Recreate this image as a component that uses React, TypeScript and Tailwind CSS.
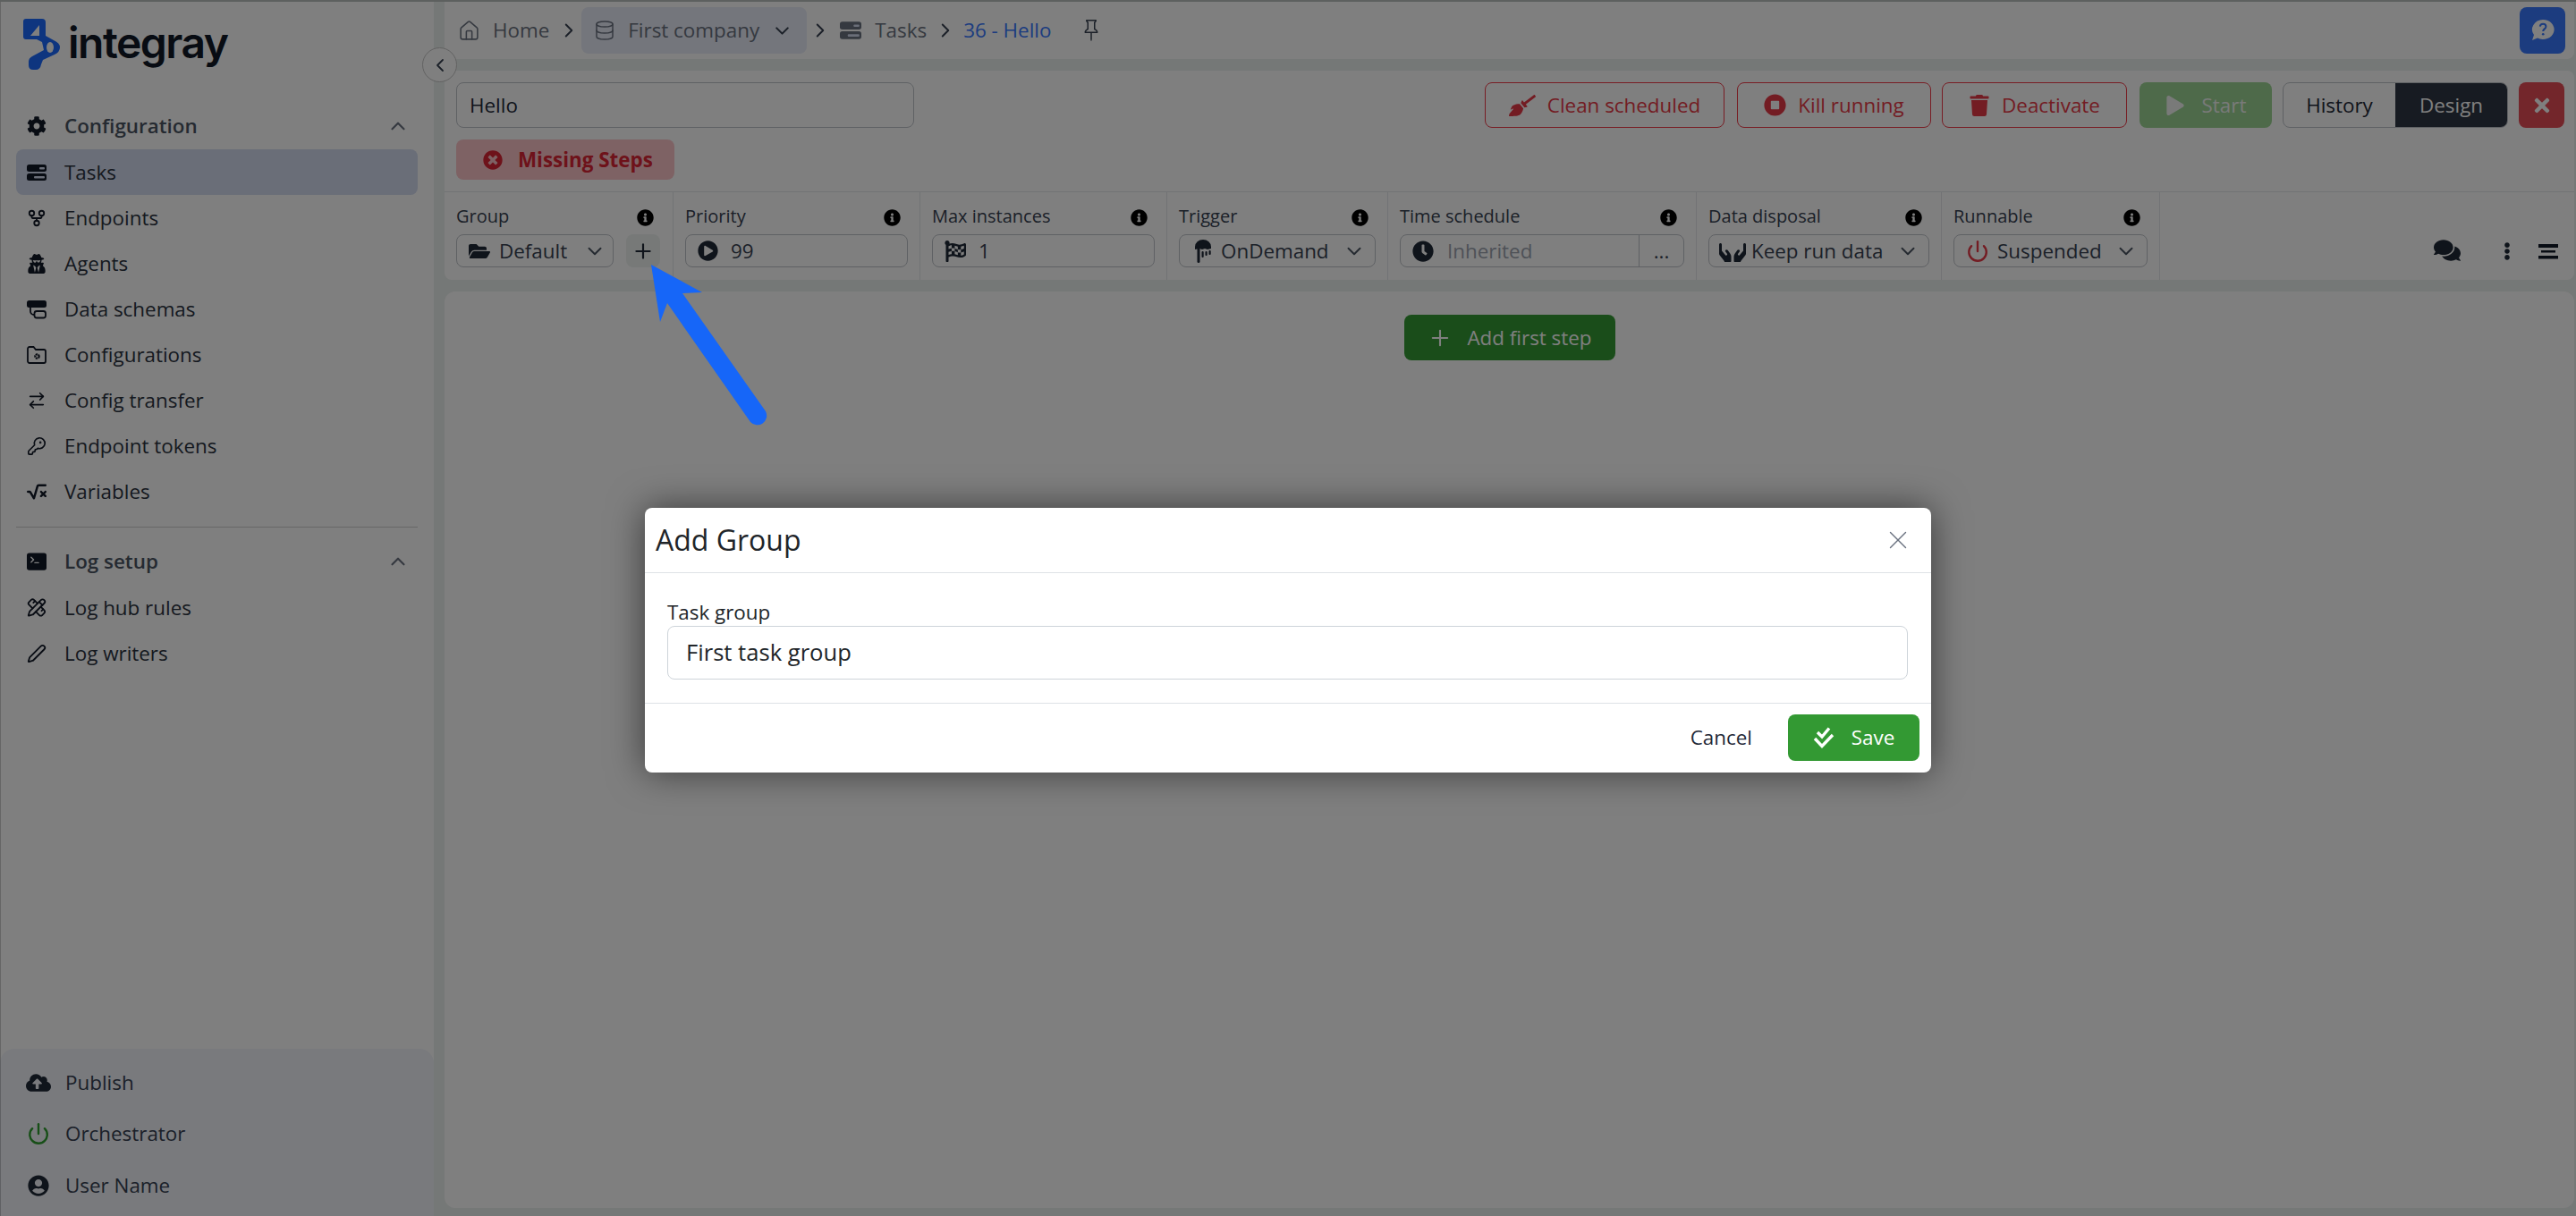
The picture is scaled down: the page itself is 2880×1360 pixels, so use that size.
import type { ReactNode } from 'react';
import {
  FaBroom,
  FaClock,
  FaCloudUploadAlt,
  FaCog,
  FaComments,
  FaEllipsisV,
  FaFlagCheckered,
  FaFolderOpen,
  FaHands,
  FaInfoCircle,
  FaPlay,
  FaPlayCircle,
  FaStopCircle,
  FaTimes,
  FaTimesCircle,
  FaTrash,
  FaUserCircle,
  FaUserSecret,
} from 'react-icons/fa';
import { FaSquareRootVariable } from 'react-icons/fa6';
import { BsPin, BsTerminalFill } from 'react-icons/bs';
import {
  ArrowRightLeft,
  ChevronDown,
  ChevronLeft,
  ChevronRight,
  ChevronUp,
  Database,
  GitFork,
  House,
  KeyRound,
  Pen,
  PencilRuler,
  Plus,
  Power,
  X,
} from 'lucide-react';

function TasksIcon({ size = 22 }: { size?: number }) {
  return (
    <svg width={size} height={size} viewBox="0 0 22 22">
      <rect x="0" y="2" width="22" height="8" rx="2.5" fill="currentColor" />
      <rect x="0" y="12" width="22" height="8" rx="2.5" fill="currentColor" />
      <rect x="14" y="5" width="6" height="2.4" rx="1" fill="#d4dcf0" />
      <rect x="8" y="15" width="12" height="2.4" rx="1" fill="#d4dcf0" />
    </svg>
  );
}

function SchemaIcon() {
  return (
    <svg width="22" height="22" viewBox="0 0 22 22" fill="none">
      <rect x="0" y="1" width="22" height="8" rx="2.5" fill="currentColor" />
      <path d="M4 9v4a4 4 0 0 0 4 4" stroke="currentColor" strokeWidth="1.8" />
      <rect x="8.5" y="13" width="12.5" height="7.5" rx="2.5" stroke="currentColor" strokeWidth="1.8" />
    </svg>
  );
}

function FolderGearIcon() {
  return (
    <svg width="22" height="20" viewBox="0 0 22 20" fill="none">
      <path
        d="M1 3a2 2 0 0 1 2-2h4.500l2.500 3h9a2 2 0 0 1 2 2v11a2 2 0 0 1-2 2H3a2 2 0 0 1-2-2z"
        stroke="currentColor"
        strokeWidth="1.8"
      />
      <circle cx="11.5" cy="11.5" r="2.2" stroke="currentColor" strokeWidth="2.2" strokeDasharray="2 0.6" />
    </svg>
  );
}

function ShowerIcon() {
  return (
    <svg width="18" height="28" viewBox="0 0 18 28" fill="currentColor">
      <path d="M0 9a9 8 0 0 1 18 0v2l-4 1-3-1-3 1-3-1-5 1z" />
      <rect x="2.5" y="10" width="3" height="17" rx="1.5" />
      <rect x="7.5" y="14" width="2.2" height="7" rx="1" />
      <rect x="11.5" y="14" width="2.2" height="5" rx="1" />
      <rect x="15.5" y="13" width="2.2" height="5" rx="1" />
    </svg>
  );
}

function BarsIcon() {
  return (
    <svg width="22" height="17" viewBox="0 0 22 17" fill="currentColor">
      <rect x="0" y="0" width="22" height="4" />
      <rect x="3" y="7" width="16" height="2.5" />
      <rect x="0" y="13" width="22" height="3.5" />
    </svg>
  );
}

function HelpBubbleIcon() {
  return (
    <svg width="26" height="24" viewBox="0 0 26 24">
      <path d="M13 0a12.500 11 0 1 1-6 20.600L1 23l2-6A12.500 11 0 0 1 13 0z" fill="#ffffff" />
      <path d="M9.800 7.600c.3-4 6.600-3.900 6.600.1 0 2.800-3.200 2.600-3.200 5.300" fill="none" stroke="#3878ff" strokeWidth="2" />
      <circle cx="13.2" cy="16.3" r="1.3" fill="#3878ff" />
    </svg>
  );
}

function DoubleCheckIcon() {
  return (
    <svg width="24" height="24" viewBox="0 0 24 24" fill="none" stroke="currentColor" strokeWidth="3.4">
      <path d="M5 6 10 11 18 1.500" />
      <path d="M2 13 10 21.500 22 9" />
    </svg>
  );
}

function LogoMark() {
  return (
    <svg width="42" height="58" viewBox="0 0 42 58">
      <path
        d="M3 1h18q4 0 4 4v15l9 5q7 3 7 8t-6 8l-13 6-2 5q-1 6-6 6h-3q-5 0-5-5v-4q0-4 4-6l13-7-2-9-6-3H3q-3 0-3-3V4q0-3 3-3z"
        fill="#1d6bff"
      />
      <path d="M18 8v12H8z" fill="#ffffff" />
      <ellipse cx="30" cy="33" rx="4" ry="6" fill="#ffffff" />
    </svg>
  );
}

function NavItem({ icon, label, active }: { icon: ReactNode; label: string; active?: boolean }) {
  return (
    <div className={`flex h-[51px] items-center rounded-lg pl-3 text-[22.4px] text-[#2b323e] ${active ? 'bg-[#d4dcf0]' : ''}`}>
      <span className="flex w-[22px] justify-center text-[#111827]">{icon}</span>
      <span className="ml-5">{label}</span>
    </div>
  );
}

function NavHeader({ icon, label }: { icon: ReactNode; label: string }) {
  return (
    <div className="flex h-[51px] items-center pb-[2px] pl-3 pr-[9px] text-[22.4px] font-semibold text-[#4b5563]">
      <span className="flex w-[22px] justify-center text-[#111827]">{icon}</span>
      <span className="ml-5 flex-1">{label}</span>
      <ChevronUp size={26} strokeWidth={2} className="text-[#6b7280]" />
    </div>
  );
}

function Sidebar() {
  return (
    <aside className="flex h-full w-[485px] shrink-0 flex-col bg-white">
      <div className="flex h-[114px] items-start pl-[26px] pt-[18px]">
        <LogoMark />
        <span className="ml-[8px] mt-[-8px] font-['Inter',sans-serif] text-[48px] font-semibold leading-[72px] tracking-[-1.5px] text-[#111827]">
          integray
        </span>
      </div>
      <div className="px-[18px]">
        <NavHeader icon={<FaCog size={22} />} label="Configuration" />
        <NavItem active icon={<TasksIcon />} label="Tasks" />
        <NavItem icon={<GitFork size={24} strokeWidth={2} />} label="Endpoints" />
        <NavItem icon={<FaUserSecret size={22} />} label="Agents" />
        <NavItem icon={<SchemaIcon />} label="Data schemas" />
        <NavItem icon={<FolderGearIcon />} label="Configurations" />
        <NavItem icon={<ArrowRightLeft size={24} strokeWidth={1.8} />} label="Config transfer" />
        <NavItem icon={<KeyRound size={24} strokeWidth={1.8} />} label="Endpoint tokens" />
        <NavItem icon={<FaSquareRootVariable size={24} />} label="Variables" />
        <div className="mb-[13px] mt-[14px] border-t border-[#cfcfcf]" />
        <NavHeader icon={<BsTerminalFill size={22} />} label="Log setup" />
        <NavItem icon={<PencilRuler size={23} strokeWidth={2} />} label="Log hub rules" />
        <NavItem icon={<Pen size={22} strokeWidth={2} />} label="Log writers" />
      </div>
      <div className="mt-auto flex h-[187px] flex-col justify-center gap-[6.5px] rounded-t-2xl bg-[#f2f4fa] pl-[29px] pt-[3px] text-[22.4px] text-[#364152]">
        <div className="flex h-[51px] items-center gap-[16px]">
          <FaCloudUploadAlt size={28} className="text-[#1f2937]" />
          <span>Publish</span>
        </div>
        <div className="flex h-[51px] items-center gap-[16px]">
          <Power size={26} strokeWidth={2.2} className="ml-[1px] mr-[1px] text-[#2f9e2f]" />
          <span>Orchestrator</span>
        </div>
        <div className="flex h-[51px] items-center gap-[16px]">
          <FaUserCircle size={24} className="ml-[2px] mr-[2px] text-[#1f2937]" />
          <span>User Name</span>
        </div>
      </div>
    </aside>
  );
}

function TopBar() {
  return (
    <div className="flex h-[64px] shrink-0 items-center rounded-b-lg bg-white pl-[15px] pr-[10px] text-[22.4px] text-[#6b7280]">
      <House size={25} strokeWidth={1.5} />
      <span className="ml-[14px]">Home</span>
      <ChevronRight size={26} strokeWidth={1.8} className="ml-[9px] text-[#374151]" />
      <div className="ml-[1px] flex h-[52px] w-[252px] items-center rounded-lg bg-[#e8ecf8] pl-[14px]">
        <Database size={24} strokeWidth={1.5} />
        <span className="ml-[14px] whitespace-nowrap">First company</span>
        <ChevronDown size={25} strokeWidth={2} className="ml-[13px] text-[#374151]" />
      </div>
      <ChevronRight size={26} strokeWidth={1.8} className="ml-[2px] text-[#374151]" />
      <span className="ml-[9px] text-[#6b7280]">
        <TasksIcon size={24} />
      </span>
      <span className="ml-[15px]">Tasks</span>
      <ChevronRight size={26} strokeWidth={1.8} className="ml-[8px] text-[#374151]" />
      <span className="ml-[7px] text-[#3878ff]">36 - Hello</span>
      <BsPin size={24} className="ml-[33px] text-[#374151]" />
      <button className="ml-auto flex h-[52px] w-[51px] items-center justify-center rounded-lg bg-[#3878ff]">
        <HelpBubbleIcon />
      </button>
    </div>
  );
}

function OutlineDanger({ icon, label, width }: { icon: ReactNode; label: string; width: string }) {
  return (
    <button className={`flex h-[51px] items-center justify-center gap-[13px] rounded-lg border border-[#f03a48] text-[22.4px] text-[#e63946] ${width}`}>
      {icon}
      <span>{label}</span>
    </button>
  );
}

function FieldCell({ label, width, children }: { label: string; width: string; children: ReactNode }) {
  return (
    <div className={`${width} shrink-0 border-r border-[#e5e7eb] pb-[14px] pl-[13px] pr-[13px] pt-[14px]`}>
      <div className="mb-[5px] flex h-[28px] items-center justify-between pr-[8px] text-[20px] text-[#374151]">
        <span className="mb-[2px]">{label}</span>
        <FaInfoCircle size={19} className="text-black" />
      </div>
      {children}
    </div>
  );
}

function SelectBox({ icon, value, className = '' }: { icon: ReactNode; value: string; className?: string }) {
  return (
    <div className={`flex h-[37px] items-center rounded-lg border border-[#bfc3c9] text-[22.4px] text-[#374151] ${className}`}>
      {icon}
      <span className="whitespace-nowrap">{value}</span>
      <ChevronDown size={26} strokeWidth={1.8} className="ml-auto mr-[7px] text-[#4b5563]" />
    </div>
  );
}

function ValueBox({ icon, value }: { icon: ReactNode; value: string }) {
  return (
    <div className="flex h-[37px] items-center rounded-lg border border-[#bfc3c9] pl-[13px] text-[22.4px] text-[#374151]">
      {icon}
      <span className="ml-[14px]">{value}</span>
    </div>
  );
}

function TaskPanel() {
  return (
    <div className="mt-[13px] shrink-0 rounded-lg bg-white">
      <div className="flex items-start justify-between border-b border-[#e5e7eb] pb-[13px] pl-[13px] pr-[11px] pt-[13px]">
        <div>
          <div className="flex h-[51px] w-[512px] items-center rounded-lg border border-[#bfc3c9] pl-[14px] text-[22.4px] text-[#1f2937]">
            Hello
          </div>
          <div className="mt-[13px] flex h-[45px] w-[244px] items-center rounded-lg bg-[#fcc5c9] pl-[30px] text-[22.4px] font-bold text-[#dc2535]">
            <FaTimesCircle size={22} />
            <span className="ml-[17px]">Missing Steps</span>
          </div>
        </div>
        <div className="flex items-center">
          <OutlineDanger icon={<FaBroom size={30} />} label="Clean scheduled" width="w-[268px]" />
          <OutlineDanger icon={<FaStopCircle size={25} />} label="Kill running" width="ml-[14px] w-[217px]" />
          <OutlineDanger icon={<FaTrash size={24} />} label="Deactivate" width="ml-[12px] w-[207px]" />
          <button className="ml-[14px] flex h-[51px] w-[148px] items-center justify-center gap-[19px] rounded-lg bg-[#9cd494] text-[22.4px] text-[#f2f5f2]">
            <FaPlay size={22} />
            <span>Start</span>
          </button>
          <div className="ml-[12px] flex h-[51px] overflow-hidden rounded-lg border border-[#bfc3c9] text-[22.4px]">
            <span className="flex w-[125px] items-center justify-center text-[#1f2937]">History</span>
            <span className="flex w-[125px] items-center justify-center bg-[#2f3744] text-white">Design</span>
          </div>
          <button className="ml-[12px] flex h-[51px] w-[51px] items-center justify-center rounded-lg bg-[#e64c56] text-white">
            <FaTimes size={24} />
          </button>
        </div>
      </div>
      <div className="flex h-[98px] items-stretch">
        <FieldCell label="Group" width="w-[256px]">
          <div className="flex items-center">
            <SelectBox
              className="w-[176px] pl-[13px]"
              icon={<FaFolderOpen size={24} className="mr-[10px] text-[#1f2937]" />}
              value="Default"
            />
            <button className="ml-[14px] flex h-[37px] w-[38px] items-center justify-center rounded-lg bg-[#eef3f1] text-[#1f2937]">
              <Plus size={26} strokeWidth={2} />
            </button>
          </div>
        </FieldCell>
        <FieldCell label="Priority" width="w-[276px]">
          <ValueBox icon={<FaPlayCircle size={23} className="text-[#1f2937]" />} value="99" />
        </FieldCell>
        <FieldCell label="Max instances" width="w-[276px]">
          <ValueBox icon={<FaFlagCheckered size={24} className="text-[#1f2937]" />} value="1" />
        </FieldCell>
        <FieldCell label="Trigger" width="w-[247px]">
          <SelectBox
            className="pl-[17px] pr-[3px]"
            icon={<span className="mr-[11px] text-[#1f2937]"><ShowerIcon /></span>}
            value="OnDemand"
          />
        </FieldCell>
        <FieldCell label="Time schedule" width="w-[345px]">
          <div className="flex h-[37px] items-center rounded-lg border border-[#bfc3c9] text-[22.4px] text-[#9ca3af]">
            <FaClock size={24} className="ml-[13px] text-[#1f2937]" />
            <span className="ml-[15px] flex-1">Inherited</span>
            <span className="flex h-full w-[50px] items-center justify-center border-l border-[#bfc3c9] text-[#374151]">...</span>
          </div>
        </FieldCell>
        <FieldCell label="Data disposal" width="w-[274px]">
          <SelectBox
            className="pl-[11px] pr-[3px]"
            icon={<FaHands size={30} className="mr-[6px] text-[#1f2937]" />}
            value="Keep run data"
          />
        </FieldCell>
        <FieldCell label="Runnable" width="w-[244px]">
          <SelectBox
            className="pl-[13px] pr-[3px]"
            icon={<Power size={26} strokeWidth={2.2} className="mr-[9px] text-[#e63946]" />}
            value="Suspended"
          />
        </FieldCell>
        <div className="flex flex-1 items-end justify-end pb-[18px] pr-[18px] text-[#1f2937]">
          <FaComments size={30} />
          <FaEllipsisV size={20} className="mb-[4px] ml-[42px]" />
          <span className="mb-[5px] ml-[25px] text-[#111827]">
            <BarsIcon />
          </span>
        </div>
      </div>
    </div>
  );
}

function AddGroupDialog() {
  return (
    <div className="absolute left-[721px] top-[568px] z-30 flex h-[296px] w-[1438px] flex-col rounded-lg bg-white shadow-[0_0_40px_rgba(0,0,0,0.55)]">
      <div className="flex h-[73px] shrink-0 items-center justify-between border-b border-[#dee2e6] pl-[12px] pr-[20px]">
        <h2 className="text-[32px] leading-none text-[#212529]">Add Group</h2>
        <X size={34} strokeWidth={1} className="text-[#6b7280]" />
      </div>
      <div className="h-[146px] shrink-0 border-b border-[#dee2e6] pl-[25px] pr-[26px] pt-[28px]">
        <label className="block text-[22.4px] leading-[31px] text-[#212529]">Task group</label>
        <div className="flex h-[60px] items-center rounded-lg border border-[#ced4da] pl-[20px] text-[25.6px] text-[#212529]">
          First task group
        </div>
      </div>
      <div className="flex flex-1 items-center justify-end pb-[1px] pr-[13px]">
        <span className="text-[22.4px] text-[#1f2937]">Cancel</span>
        <button className="ml-[40px] flex h-[52px] w-[147px] items-center justify-center gap-[19px] rounded-lg bg-[#339933] text-[22.4px] text-white">
          <DoubleCheckIcon />
          <span>Save</span>
        </button>
      </div>
    </div>
  );
}

export default function App() {
  return (
    <div className="relative h-[1360px] w-[2880px] overflow-hidden bg-[#ebf0ee] font-['Open_Sans',sans-serif]">
      <div className="flex h-full pt-[2px]">
        <Sidebar />
        <main className="ml-[12px] flex h-full min-w-0 flex-1 flex-col pr-[2px]">
          <TopBar />
          <TaskPanel />
          <div className="mb-[9px] mt-[13px] flex flex-1 justify-center rounded-xl bg-white pl-[1px] pt-[26px]">
            <button className="flex h-[51px] w-[236px] items-center justify-center gap-[16px] rounded-lg bg-[#359a34] text-[22.4px] text-white">
              <Plus size={28} strokeWidth={1.8} />
              <span>Add first step</span>
            </button>
          </div>
        </main>
      </div>

      <button className="absolute left-[472px] top-[53px] z-10 flex h-[39px] w-[39px] items-center justify-center rounded-full border border-[#c4c4c4] bg-white text-[#374151]">
        <ChevronLeft size={24} strokeWidth={1.8} />
      </button>

      {/* modal backdrop */}
      <div className="absolute inset-0 z-20 border-l border-t-2 border-black/20 bg-black/50" />

      <AddGroupDialog />

      {/* annotation arrow sits above the backdrop */}
      <svg className="absolute left-[720px] top-[290px] z-30" width="140" height="190" viewBox="720 290 140 190">
        <path
          d="M728 296 785 327 763 328 856 460a10.500 10.500 0 0 1-17 12L746 339 738 360z"
          fill="#1666f8"
        />
      </svg>
    </div>
  );
}
